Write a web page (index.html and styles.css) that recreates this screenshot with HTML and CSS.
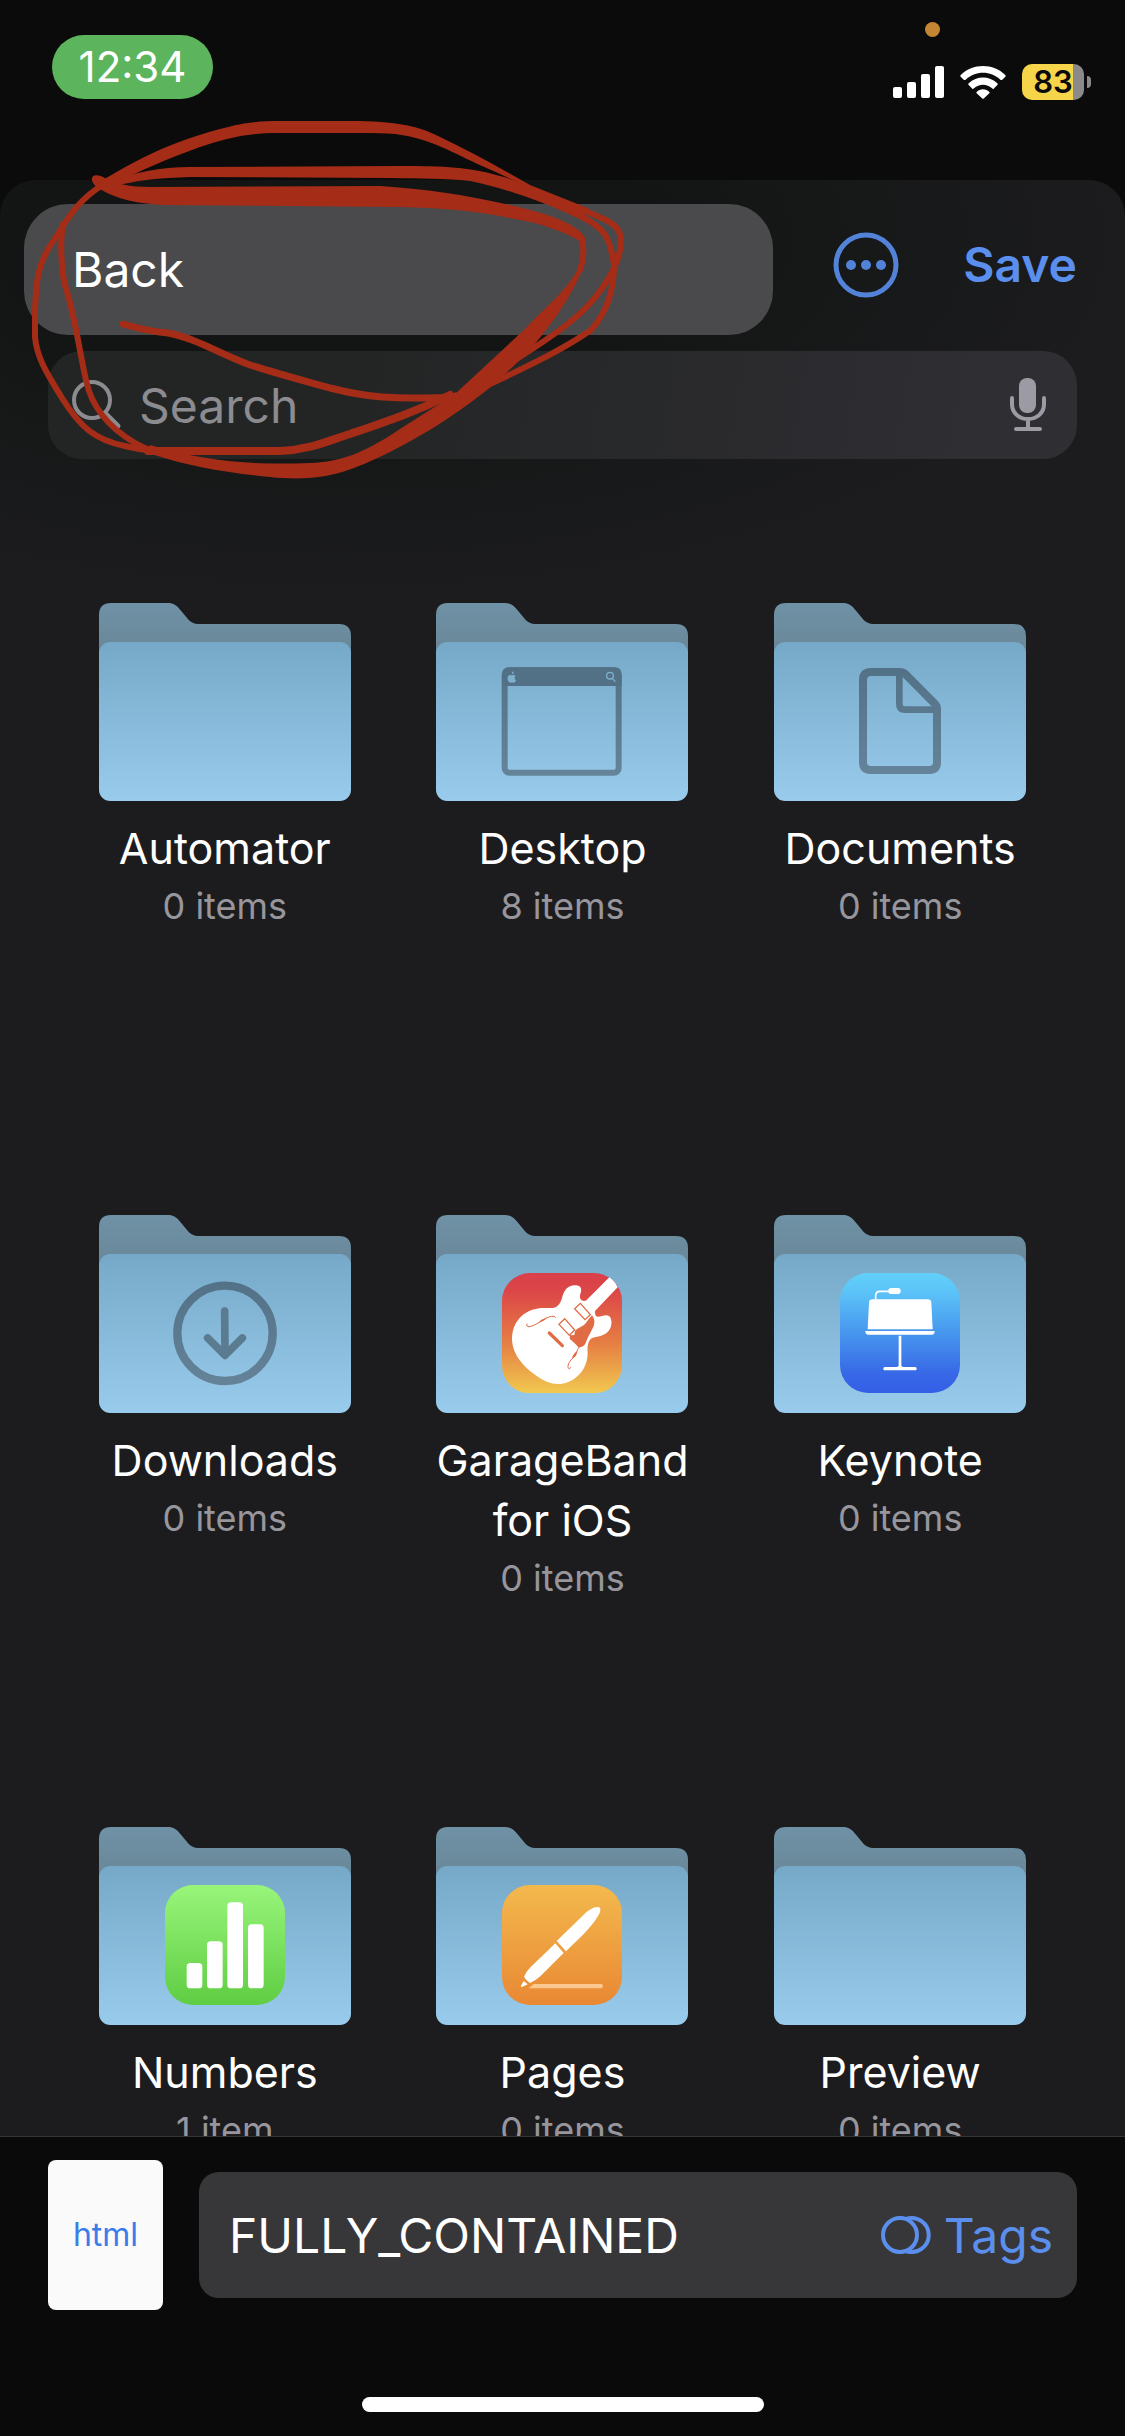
FILE: index.html
```html
<!DOCTYPE html>
<html lang="en">
<head>
<meta charset="utf-8">
<meta name="viewport" content="width=device-width, initial-scale=1">
<title>Save to Files</title>
<link rel="stylesheet" href="styles.css">
</head>
<body>
<svg class="defs" aria-hidden="true">
  <defs>
    <linearGradient id="g-back" x1="0" y1="0" x2="0" y2="1"><stop offset="0" stop-color="#7092a6"/><stop offset="1" stop-color="#678495"/></linearGradient>
    <linearGradient id="g-front" x1="0" y1="0" x2="0" y2="1"><stop offset="0" stop-color="#76a9c8"/><stop offset="1" stop-color="#99ccec"/></linearGradient>
    <linearGradient id="g-glyph" gradientUnits="userSpaceOnUse" x1="0" y1="190" x2="0" y2="520"><stop offset="0" stop-color="#527187"/><stop offset="1" stop-color="#658499"/></linearGradient>
    <linearGradient id="g-garage" x1="0" y1="0" x2="0" y2="1"><stop offset="0" stop-color="#d93f4a"/><stop offset=".15" stop-color="#dc4648"/><stop offset=".6" stop-color="#e68144"/><stop offset="1" stop-color="#f1c94f"/></linearGradient>
    <linearGradient id="g-keynote" x1="0" y1="0" x2="0" y2="1"><stop offset="0" stop-color="#62d0fa"/><stop offset=".15" stop-color="#5cc4f8"/><stop offset=".5" stop-color="#4796ee"/><stop offset=".85" stop-color="#3767e6"/><stop offset="1" stop-color="#335fe6"/></linearGradient>
    <linearGradient id="g-numbers" x1="0" y1="0" x2="0" y2="1"><stop offset="0" stop-color="#98f57a"/><stop offset="1" stop-color="#5fcd43"/></linearGradient>
    <linearGradient id="g-pages" x1="0" y1="0" x2="0" y2="1"><stop offset="0" stop-color="#f3b94d"/><stop offset="1" stop-color="#e98834"/></linearGradient>
    <symbol id="folder" viewBox="0 0 756 594">
      <path fill="url(#g-back)" d="M0 180V36Q0 0 36 0H206C224 0 234 8 246 23L264 45C274 57 284 63 302 63H720Q756 63 756 99V180Z"/>
      <rect fill="url(#g-front)" y="117" width="756" height="477" rx="34"/>
    </symbol>
  </defs>
</svg>

<header class="status">
  <span class="clock">12:34</span>
  <div class="indicators">
    <span class="privacy-dot"></span>
    <svg width="51" height="33" viewBox="0 0 51 33" fill="#fff" aria-label="Signal">
      <rect y="21" width="9" height="11" rx="2"/><rect x="14" y="16" width="9" height="16" rx="2"/><rect x="28" y="8" width="9" height="24" rx="2"/><rect x="42" width="9" height="32" rx="2"/>
    </svg>
    <svg width="46" height="33" viewBox="0 0 138 99" fill="#fff" aria-label="Wi-Fi">
      <path d="M2 27C38-9 100-9 136 27Q138 30 136 32L126 42Q124 43 121 41C92 13 46 13 17 41Q14 43 12 42L2 32Q0 30 2 27Z"/>
      <path d="M26 52C50 29 88 29 112 52Q115 55 112 57L101 68Q99 70 96 67C81 53 57 53 42 67Q39 70 37 68L26 57Q23 55 26 52Z"/>
      <path d="M50 78C60 67 78 67 88 78Q90 80 88 82L72 97Q69 100 66 97L50 82Q48 80 50 78Z"/>
    </svg>
    <span class="battery"><span class="battery-cell">83</span><span class="battery-nub"></span></span>
  </div>
</header>

<main class="sheet">
  <div class="toolbar">
    <button class="back" type="button">Back</button>
    <div class="actions">
      <button class="more" type="button" aria-label="More options">
        <svg width="66" height="66" viewBox="0 0 66 66"><circle cx="33" cy="33" r="30" fill="none" stroke="#5283d8" stroke-width="5"/><g fill="#5283d8"><circle cx="18" cy="33" r="5"/><circle cx="33" cy="33" r="5"/><circle cx="48" cy="33" r="5"/></g></svg>
      </button>
      <button class="save" type="button">Save</button>
    </div>
  </div>

  <label class="search">
    <svg width="50" height="50" viewBox="0 0 50 50" fill="none" stroke="#8b8b90" stroke-width="4" stroke-linecap="round"><circle cx="20" cy="20" r="18"/><path stroke-width="5" d="M33 33L46 46"/></svg>
    <input class="search-input" type="search" placeholder="Search" aria-label="Search">
    <svg width="36" height="54" viewBox="0 0 36 54"><rect x="9" y="0" width="17" height="35" rx="8" fill="#9c9ba3"/><path d="M2 20V26C2 35 9 41 18 41S34 35 34 26V20M18 41V51M6 51H30" fill="none" stroke="#9c9ba3" stroke-width="4" stroke-linecap="round"/></svg>
  </label>

  <ul class="files">
    <li><button class="file" type="button">
      <svg class="folder" viewBox="0 0 756 594"><use href="#folder"/></svg>
      <span class="name">Automator</span><span class="count">0 items</span>
    </button></li>
    <li><button class="file" type="button">
      <svg class="folder" viewBox="0 0 756 594"><use href="#folder"/>
        <rect x="206" y="202" width="342" height="307" rx="14" fill="none" stroke="url(#g-glyph)" stroke-width="18"/>
        <path fill="#527187" d="M198 249V215Q198 193 220 193H536Q557 193 557 215V249Z"/>
        <g fill="#7fb0cc"><path d="M228 214C227 209 230 206 233 205Q234 211 228 214ZM217 218C221 214 226 217 228 217S235 214 239 218C234 223 236 230 240 232Q237 241 232 239Q228 237 224 239C217 240 211 225 217 218Z"/></g>
        <g fill="none" stroke="#7fb0cc" stroke-width="4" stroke-linecap="round"><circle cx="522" cy="218" r="10"/><path d="M529 226L537 235"/></g>
      </svg>
      <span class="name">Desktop</span><span class="count">8 items</span>
    </button></li>
    <li><button class="file" type="button">
      <svg class="folder" viewBox="0 0 756 594"><use href="#folder"/>
        <g fill="none" stroke="url(#g-glyph)" stroke-linejoin="round"><path stroke-width="24" d="M291 207H378Q388 207 395 214L482 302Q489 309 489 318V478Q489 501 466 501H290Q267 501 267 478V231Q267 207 291 207Z"/><path stroke-width="20" d="M376 210V303Q376 320 393 320H485"/></g>
      </svg>
      <span class="name">Documents</span><span class="count">0 items</span>
    </button></li>
    <li><button class="file" type="button">
      <svg class="folder" viewBox="0 0 756 594"><use href="#folder"/>
        <g fill="none" stroke="url(#g-glyph)" stroke-width="25"><circle cx="378" cy="355" r="143"/></g>
        <path d="M377 288L378 418M326 369L378 421L430 369" fill="none" stroke="#5b7b91" stroke-width="23" stroke-linecap="round" stroke-linejoin="round"/>
      </svg>
      <span class="name">Downloads</span><span class="count">0 items</span>
    </button></li>
    <li><button class="file" type="button">
      <svg class="folder" viewBox="0 0 756 594"><use href="#folder"/>
        <svg x="198" y="174" width="360" height="361" viewBox="249 249 360 361">
          <rect x="249" y="249" width="360" height="361" rx="84" fill="url(#g-garage)"/>
          <path fill="#fff" d="M571 262L503 330Q496 336 488 331Q480 325 484 312C490 298 487 285 467 286C446 287 436 300 430 320C424 343 415 354 395 354C372 354 352 352 325 366C294 383 278 414 279 450C281 496 315 531 350 556C385 581 415 590 450 575C491 556 506 521 506 488C505 470 506 455 516 446C530 439 552 442 568 424C580 411 581 386 570 378C560 371 547 381 535 380Q527 378 528 363L596 292Q588 274 571 262Z"/>
          <path fill="#e06c45" d="M519 376C526 385 530 398 521 415C511 434 507 442 501 457C496 470 486 473 478 472Q473 466 467 460L452 446L453 436L466 435L468 423C480 411 490 411 500 400Q511 384 519 376Z"/>
          <g fill="none" stroke="#e06c45" stroke-width="4"><path fill="#fff" d="M484 340L514 374L498 389L467 356ZM437 386L467 420L451 436L420 403Z"/><path stroke-width="10" stroke-linecap="round" d="M391 429L430 467"/><path stroke-width="3" stroke-linecap="round" d="M410 383Q406 376 398 379C384 382 376 386 367 393C354 402 340 410 327 410Q320 409 324 402M480 472C472 480 475 493 463 503C452 512 446 523 447 533Q450 540 455 533"/></g>
          <path fill="#e06c45" d="M358 399Q367 386 384 385Q374 395 358 399ZM474 484Q475 498 459 507Q460 493 474 484Z"/>
        </svg>
      </svg>
      <span class="name">GarageBand for iOS</span><span class="count">0 items</span>
    </button></li>
    <li><button class="file" type="button">
      <svg class="folder" viewBox="0 0 756 594"><use href="#folder"/>
        <svg x="198" y="174" width="360" height="360" viewBox="270 249 360 360">
          <rect x="270" y="249" width="360" height="360" rx="84" fill="url(#g-keynote)"/>
          <g fill="#fff"><path d="M367 328H533Q543 328 544 338L548 418H353L357 338Q358 328 367 328Z"/><path d="M346 423H554Q554 434 545 434H355Q346 434 346 423Z"/><rect x="415" y="294" width="37" height="18" rx="8"/><path d="M446 437H454V527Q456 531 462 531H496Q500 531 500 536T496 541H404Q400 541 400 536T404 531H438Q444 531 446 527Z"/></g>
          <path d="M377 330V317Q377 304 390 304H418" fill="none" stroke="#fff" stroke-width="5"/>
        </svg>
      </svg>
      <span class="name">Keynote</span><span class="count">0 items</span>
    </button></li>
    <li><button class="file" type="button">
      <svg class="folder" viewBox="0 0 756 594"><use href="#folder"/>
        <svg x="198" y="174" width="360" height="360" viewBox="0 0 360 360">
          <rect width="360" height="360" rx="84" fill="url(#g-numbers)"/>
          <g fill="#fff"><rect x="65" y="234" width="47" height="76" rx="11"/><rect x="126" y="169" width="47" height="141" rx="11"/><rect x="187" y="52" width="47" height="258" rx="11"/><rect x="249" y="118" width="47" height="192" rx="11"/></g>
        </svg>
      </svg>
      <span class="name">Numbers</span><span class="count">1 item</span>
    </button></li>
    <li><button class="file" type="button">
      <svg class="folder" viewBox="0 0 756 594"><use href="#folder"/>
        <svg x="198" y="174" width="360" height="360" viewBox="0 0 360 360">
          <rect width="360" height="360" rx="84" fill="url(#g-pages)"/>
          <path fill="#fbc88f" d="M95 297H298Q303 299 303 303T298 310H80Z"/>
          <path fill="#fff" d="M164 168L248 86C262 73 278 64 290 66C298 69 296 80 288 93C276 113 260 132 246 146L192 199ZM160 175L185 204L115 274Q101 287 84 294Q72 287 66 275Q73 259 86 246ZM65 288L77 298L60 306Q55 306 57 302Z"/>
        </svg>
      </svg>
      <span class="name">Pages</span><span class="count">0 items</span>
    </button></li>
    <li><button class="file" type="button">
      <svg class="folder" viewBox="0 0 756 594"><use href="#folder"/></svg>
      <span class="name">Preview</span><span class="count">0 items</span>
    </button></li>
  </ul>
</main>

<footer class="dock">
  <div class="save-row">
    <span class="thumb">html</span>
    <div class="filename">
      <input class="filename-input" type="text" value="FULLY_CONTAINED" aria-label="File name">
      <button class="tags" type="button">
        <svg width="54" height="40" viewBox="0 0 54 40" fill="none" stroke="#5b8fee" stroke-width="4"><circle cx="20" cy="20" r="17"/><path d="M26 4A17 17 0 1 1 26 36"/></svg>
        Tags
      </button>
    </div>
  </div>
  <div class="home-indicator"></div>
</footer>

<svg class="scribble" width="640" height="490" viewBox="0 0 640 490" aria-hidden="true">
  <g fill="#a52c17">
    <path d="M97 184C150 150 190 137 220 129C245 122 260 121 280 121H360C395 122 415 125 436 135C470 151 500 168 530 185L590 209L580 214C550 201 520 182 482 166C455 154 430 138 395 134C385 133 375 133 365 133H275C250 133 225 138 200 147C165 160 140 170 112 186Z"/>
    <path d="M105 184C135 172 160 167 190 167L400 166C445 166 470 167 500 176C525 182 550 200 590 213L575 217C540 200 500 187 470 181C445 178 420 179 390 178L190 177C160 178 135 180 112 187Z"/>
    <path d="M101 176C115 184 130 187 150 187L380 186C430 189 480 197 530 210C555 216 582 227 586 240L580 241C565 232 540 223 515 219C480 211 440 208 400 207L165 205C140 204 115 199 100 189C90 184 88 172 101 176Z"/>
    <path d="M578 268C570 288 540 312 525 329L455 394L400 429C370 449 345 462 310 463C260 465 210 463 150 445L148 453C190 467 230 473 270 477C320 482 345 474 390 452C430 432 465 408 492 386L520 360C545 335 570 300 583 268Z"/>
  </g>
  <g fill="none" stroke="#a52c17" stroke-width="6" stroke-linecap="round" stroke-linejoin="round">
    <path d="M579 236C586 242 583 262 580 270"/>
    <path d="M580 209C605 219 621 224 621 240C621 270 592 305 570 322C547 341 525 353 495 373"/>
    <path d="M572 212C605 227 610 236 614 265C614 300 600 320 591 330C565 348 535 363 490 384"/>
    <path d="M104 184C75 202 66 222 56 237C37 262 36 282 35 310V337C37 360 50 378 62 398C80 427 95 440 125 446C137 449 145 450 155 451"/>
    <path d="M63 224C60 240 61 270 65 285C76 320 80 355 86 380C92 410 113 430 135 443C142 447 148 449 153 451"/>
    <path stroke-width="8" d="M148 451H280C310 450 330 440 350 434C385 422 415 412 450 395"/>
    <path stroke-width="7" d="M123 324C140 329 155 332 168 333C195 338 220 354 250 365C275 373 305 381 330 388C370 398 390 398 425 398C440 398 448 398 456 396"/>
  </g>
</svg>
</body>
</html>
```
FILE: styles.css
```css
* { box-sizing: border-box; }

body {
  margin: 0;
  position: relative;
  height: 100vh;
  display: flex;
  flex-direction: column;
  overflow: hidden;
  background: #0b0b0b;
  color: #fff;
  font-family: Inter, "Liberation Sans", sans-serif;
}

button, input {
  margin: 0;
  padding: 0;
  border: 0;
  background: none;
  color: inherit;
  font: inherit;
  outline: none;
}

svg { display: block; flex: none; }
.defs { position: absolute; width: 0; height: 0; }

.status {
  flex: none;
  height: 180px;
  padding: 35px 34px 0 52px;
  display: flex;
  justify-content: space-between;
  align-items: flex-start;
}
.clock {
  width: 161px;
  border-radius: 32px;
  background: #5cb45c;
  font-size: 42px;
  line-height: 64px;
  text-align: center;
}
.indicators {
  position: relative;
  display: flex;
  align-items: center;
  gap: 16px;
  padding-top: 29px;
}
.privacy-dot {
  position: absolute;
  top: -13px;
  left: 32px;
  width: 15px;
  height: 15px;
  border-radius: 50%;
  background: #c48632;
}
.battery { display: flex; align-items: center; gap: 3px; }
.battery-cell {
  width: 62px;
  border-radius: 10px;
  background: linear-gradient(90deg, #f7d54a 51px, #8a8a8a 51px);
  color: #0b0b0b;
  font-size: 31px;
  font-weight: 600;
  line-height: 36px;
  text-align: center;
}
.battery-nub { width: 4px; height: 12px; border-radius: 0 4px 4px 0; background: #8a8a8a; }

.sheet {
  flex: 1;
  min-height: 0;
  overflow: hidden;
  padding-top: 24px;
  border-radius: 36px 36px 0 0;
  background: radial-gradient(ellipse 800px 360px at 30% 60px, #131514 40%, #1c1c1e) #1c1c1e;
}
.toolbar { display: flex; gap: 60px; padding: 0 48px 0 24px; }
.back {
  flex: 1;
  height: 131px;
  padding-left: 48px;
  border-radius: 44px;
  background: #4a4a4c;
  font-size: 48px;
  text-align: left;
}
.actions { display: flex; align-items: center; gap: 64px; padding-bottom: 10px; }
.save { color: #5b8fee; font-size: 48px; font-weight: 600; }

.search {
  display: flex;
  align-items: center;
  height: 108px;
  margin: 16px 48px 0;
  padding: 0 31px 0 24px;
  border-radius: 34px;
  background: linear-gradient(100deg, #232525 30%, #2f2e33 90%);
}
.search-input { flex: 1; min-width: 0; padding-left: 17px; font-size: 48px; }
.search-input::placeholder { color: #8b8b90; opacity: 1; }

.files {
  display: grid;
  grid-template-columns: repeat(3, 1fr);
  grid-auto-rows: 612px;
  margin: 144px 0 0;
  padding: 0 56px;
  list-style: none;
}
.file { display: flex; flex-direction: column; align-items: center; width: 100%; }
.folder { width: 252px; height: 198px; margin-bottom: 17px; }
.name { max-width: 280px; font-size: 43px; line-height: 60px; }
.count { color: #97969c; font-size: 36px; line-height: 56px; }

.dock { flex: none; border-top: 1px solid #363637; padding: 23px 48px 24px; background: #0a0a0a; }
.save-row { display: flex; align-items: center; gap: 36px; }
.thumb {
  width: 115px;
  border-radius: 8px;
  background: #fafafa;
  color: #3b7de8;
  font-size: 32px;
  line-height: 150px;
  text-align: center;
}
.filename {
  flex: 1;
  min-width: 0;
  display: flex;
  align-items: center;
  height: 126px;
  padding: 0 24px 0 30px;
  border-radius: 20px;
  background: #373739;
}
.filename-input { flex: 1; min-width: 0; font-size: 48px; }
.tags { display: flex; align-items: center; gap: 10px; color: #5b8fee; font-size: 48px; }
.home-indicator { width: 402px; height: 15px; margin: 87px auto 0; border-radius: 8px; background: #fff; }

.scribble { position: absolute; top: 0; left: 0; pointer-events: none; }
```
